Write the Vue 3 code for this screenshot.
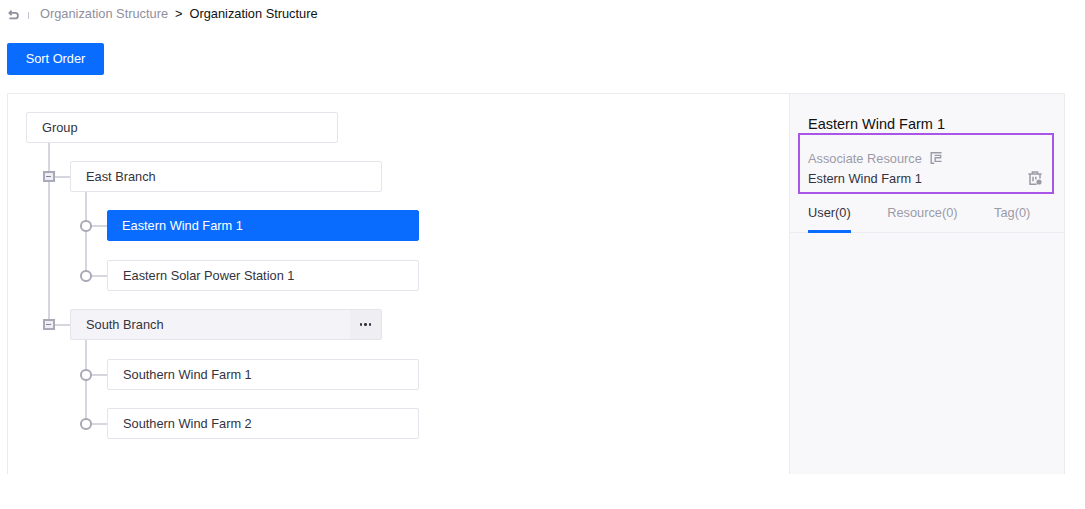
<template>
  <div class="page">
    <div class="crumbs">
      <svg class="back" width="11" height="10" viewBox="0 0 11 10" fill="none" stroke="#8f8f9d" stroke-width="1.8">
        <path d="M3.6.7 1.4 2.9l2.2 2.2" />
        <path d="M1.6 2.9h5.6a2.7 2.7 0 0 1 0 5.5H1.4" />
      </svg>
      <span class="sep"></span>
      <span class="crumb-parent">Organization Structure</span>
      <span class="crumb-arrow">&gt;</span>
      <span class="crumb-current">Organization Structure</span>
    </div>

    <button class="btn-primary" type="button">Sort Order</button>

    <div class="panel">
      <div class="tree">
        <div class="node root">Group</div>
        <div class="branches">
          <div v-for="branch in branches" :key="branch.name" class="branch">
            <div class="branch-row">
              <span class="toggle"></span>
              <div class="node" :class="{ hovered: branch.hovered }">
                <span>{{ branch.name }}</span>
                <span v-if="branch.hovered" class="more">
                  <i></i><i></i><i></i>
                </span>
              </div>
            </div>
            <div class="leaves">
              <div v-for="leaf in branch.leaves" :key="leaf.name" class="leaf-row">
                <span class="dot"></span>
                <div class="node" :class="{ active: leaf.active }">{{ leaf.name }}</div>
              </div>
            </div>
          </div>
        </div>
      </div>

      <aside class="side">
        <h3 class="side-title">Eastern Wind Farm 1</h3>
        <div class="resource-box">
          <div class="resource-label">
            <span>Associate Resource</span>
            <svg width="13" height="12" viewBox="0 0 13 12" fill="none" stroke="#9b9ba8" stroke-width="1.4">
              <path d="M11.6.8H1.2v10.4h3" />
              <path d="M4.6 3.4h6v2.4H5.2v3.6h6.4" />
            </svg>
          </div>
          <div class="resource-value">
            <span>Estern Wind Farm 1</span>
            <svg width="14" height="14" viewBox="0 0 14 14" fill="none" stroke="#9b9ba8" stroke-width="1.5">
              <path d="M.4 3h13.2M4.4 3V1h5.2v2" />
              <path d="M2 3v10.2h6.6M12 3v4.6" />
              <path d="M5 5.8v4.4M7.8 5.8v2.6" />
              <circle cx="11" cy="11" r="2.6" fill="#9b9ba8" stroke="none" />
            </svg>
          </div>
        </div>
        <div class="tabs">
          <span v-for="(tab, i) in tabs" :key="tab" class="tab" :class="{ on: i === 0 }">{{ tab }}</span>
        </div>
      </aside>
    </div>
  </div>
</template>

<script setup>
const branches = [
  {
    name: 'East Branch',
    leaves: [
      { name: 'Eastern Wind Farm 1', active: true },
      { name: 'Eastern Solar Power Station 1' }
    ]
  },
  {
    name: 'South Branch',
    hovered: true,
    leaves: [{ name: 'Southern Wind Farm 1' }, { name: 'Southern Wind Farm 2' }]
  }
]

const tabs = ['User(0)', 'Resource(0)', 'Tag(0)']
</script>

<style>
html,
body {
  margin: 0;
  background: #fff;
}
</style>

<style scoped>
.page {
  width: 1085px;
  height: 509px;
  box-sizing: border-box;
  padding: 0 20px 35px 7px;
  display: flex;
  flex-direction: column;
  font-family: 'Liberation Sans', Arial, sans-serif;
  font-size: 12.8px;
  color: #33333d;
  overflow: hidden;
}

.crumbs {
  height: 27px;
  display: flex;
  align-items: center;
  padding-left: 1px;
}

.back {
  margin-top: 2px;
}

.sep {
  width: 1px;
  height: 7px;
  margin: 3px 11px 0 9px;
  background: #c4c4cc;
}

.crumb-parent {
  color: #8f8f9d;
}

.crumb-arrow {
  margin: 0 7px;
  color: #111;
}

.crumb-current {
  color: #111;
}

.btn-primary {
  width: 97px;
  height: 32px;
  margin-top: 16px;
  padding: 0 0 2px;
  border: 0;
  border-radius: 2px;
  background: #0a6cff;
  color: #fff;
  font: inherit;
}

.panel {
  flex: 1;
  margin-top: 18px;
  display: flex;
  min-height: 0;
  border: 1px solid #ececf0;
  border-bottom: 0;
}

.tree {
  flex: 1;
  padding: 18px 0 0 18px;
}

.node {
  box-sizing: border-box;
  width: 312px;
  height: 31px;
  display: flex;
  align-items: center;
  justify-content: space-between;
  padding-left: 15px;
  border: 1px solid #e4e4ea;
  border-radius: 2px;
  background: #fff;
  position: relative;
}

.branches {
  display: flow-root;
  position: relative;
  padding-left: 44px;
}

/* main trunk from the root down to the last branch */
.branches::before {
  content: '';
  position: absolute;
  left: 22px;
  top: 0;
  width: 2px;
  height: 180px;
  background: #d6d6de;
}

.branch-row {
  margin-top: 18px;
  position: relative;
}

.toggle {
  position: absolute;
  left: -27px;
  top: 10px;
  z-index: 1;
  box-sizing: border-box;
  width: 11.5px;
  height: 11px;
  border: 2px solid #a9a9b7;
  background: #eeeef4;
}

.toggle::before {
  content: '';
  position: absolute;
  left: 1.2px;
  top: 2.7px;
  width: 5px;
  height: 1.6px;
  background: #85859a;
}

.toggle::after,
.dot::after {
  content: '';
  position: absolute;
  height: 2px;
  background: #d6d6de;
}

.toggle::after {
  left: 10px;
  top: 3px;
  width: 15px;
}

.node.hovered {
  background: #f4f4f8;
  padding-right: 0;
}

.more {
  width: 31px;
  height: 29px;
  display: flex;
  align-items: center;
  justify-content: center;
  gap: 2px;
  background: #eeeef3;
}

.more i {
  width: 2.5px;
  height: 2.5px;
  border-radius: 50%;
  background: #33333d;
}

.leaves {
  display: flow-root;
  position: relative;
  padding-left: 37px;
}

.leaves::before {
  content: '';
  position: absolute;
  left: 15px;
  top: 0;
  width: 2px;
  height: 83px;
  background: #d6d6de;
}

.leaf-row {
  margin-top: 18px;
  position: relative;
}

/* row pitch in the reference alternates between 49 and 50 */
.branch:first-child .leaf-row + .leaf-row,
.branch + .branch .leaf-row:first-child {
  margin-top: 19px;
}

.dot {
  position: absolute;
  left: -27px;
  top: 10px;
  box-sizing: border-box;
  width: 11.5px;
  height: 11.5px;
  border: 2px solid #a9a9b7;
  border-radius: 50%;
  background: #fff;
}

.dot::after {
  left: 9.5px;
  top: 2.8px;
  width: 15px;
}

.node.active {
  background: #0a6cff;
  border-color: #0a6cff;
  color: #fff;
  padding-left: 14px;
}

.side {
  width: 275px;
  box-sizing: border-box;
  border-left: 1px solid #ececf0;
  background: #f8f8fb;
  padding-top: 22px;
}

.side-title {
  margin: 0 0 0 18px;
  font-size: 14.5px;
  line-height: 17px;
  font-weight: 400;
  color: #111;
}

.resource-box {
  box-sizing: border-box;
  width: 256px;
  height: 61px;
  margin-left: 8px;
  padding: 15px 10px 0 8px;
  border: 2px solid #a855e8;
}

.resource-label {
  display: flex;
  align-items: center;
  gap: 8px;
  height: 16px;
  color: #9b9ba8;
}

.resource-value {
  display: flex;
  align-items: center;
  justify-content: space-between;
  height: 16px;
  margin-top: 4px;
  color: #33333d;
}

.tabs {
  display: flex;
  gap: 36.5px;
  height: 38px;
  padding-left: 18px;
  border-bottom: 1px solid #ececf0;
  color: #9b9ba8;
}

.tab {
  box-sizing: border-box;
  height: 39px;
  padding-top: 11px;
  line-height: 15px;
}

.tab.on {
  color: #33333d;
  border-bottom: 3px solid #0a6cff;
}
</style>
